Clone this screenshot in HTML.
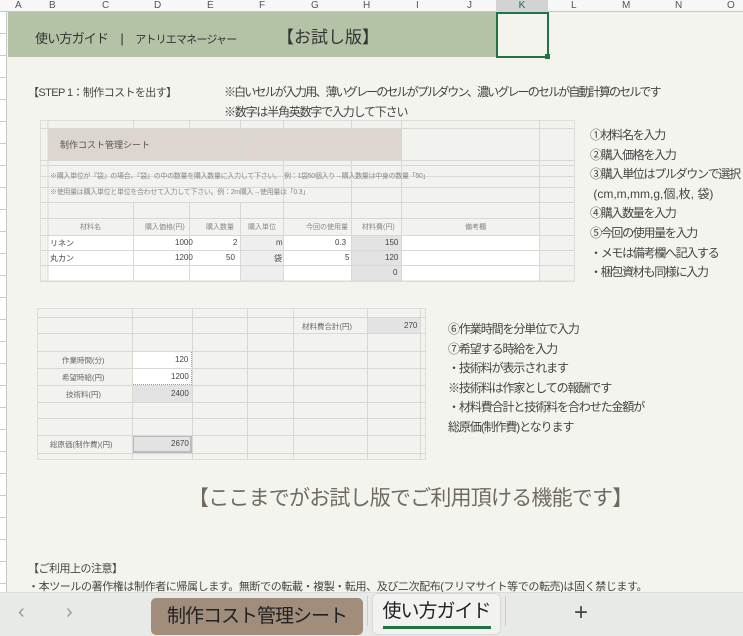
<!DOCTYPE html>
<html><head><meta charset="utf-8"><style>
*{margin:0;padding:0;box-sizing:border-box}
body{width:743px;height:636px;overflow:hidden;background:#f4f4ef;position:relative;font-family:"Liberation Sans","Noto Sans CJK JP",sans-serif;color:#444}
.a{position:absolute;white-space:nowrap}
</style></head><body>
<div class="a" style="left:0;top:0;width:743px;height:12px;background:#f7f7f7;border-bottom:1px solid #c8c8c8"></div>
<div class="a" style="left:0;top:0;width:743px;height:12px;font-size:10px;color:#555;line-height:12px">
<span class="a" style="left:15px">A</span><span class="a" style="left:49px">B</span><span class="a" style="left:102px">C</span><span class="a" style="left:154px">D</span><span class="a" style="left:207px">E</span><span class="a" style="left:259px">F</span><span class="a" style="left:311px">G</span><span class="a" style="left:363px">H</span><span class="a" style="left:416px">I</span><span class="a" style="left:467px">J</span><span class="a" style="left:496px;width:52px;text-align:center;background:#d3d3d3;color:#1d6b3a">K</span><span class="a" style="left:571px">L</span><span class="a" style="left:622px">M</span><span class="a" style="left:675px">N</span><span class="a" style="left:727px">O</span></div>
<div class="a" style="left:0;top:12px;width:7px;height:580px;background:#fff;border-right:1px solid #c8c8c8;background-image:repeating-linear-gradient(#fff 0 21px,#ccc 21px 22px)"></div>
<div class="a" style="left:8px;top:12px;width:488px;height:45px;background:#b4c2a6"></div>
<div class="a" style="left:35px;top:28px;font-size:13px;color:#333;letter-spacing:-0.8px">使い方ガイド　|　<span style="font-size:11px">アトリエマネージャー</span></div>
<div class="a" style="left:277px;top:23px;font-size:17px;color:#333">【お試し版】</div>
<div class="a" style="left:496px;top:12px;width:53px;height:46px;border:2px solid #217346"></div>
<div class="a" style="left:545px;top:54px;width:5px;height:5px;background:#217346"></div>
<div class="a" style="left:28px;top:84px;font-size:11px;color:#444;letter-spacing:-0.6px">【STEP 1：制作コストを出す】</div>
<div class="a" style="left:224px;top:83px;font-size:12px;color:#444;letter-spacing:-1.85px">※白いセルが入力用、薄いグレーのセルがプルダウン、濃いグレーのセルが自動計算のセルです</div>
<div class="a" style="left:224px;top:103px;font-size:12px;color:#444;letter-spacing:-1.2px">※数字は半角英数字で入力して下さい</div>
<div class="a" style="left:40px;top:120px;width:535px;height:162px;background:#f2f2ee;border:1px solid #ddd"></div>
<div class="a" style="left:48px;top:128px;width:353px;height:32px;background:#ddd6d0"></div>
<div class="a" style="left:48px;top:235px;width:491px;height:46px;background:#fff"></div>
<div class="a" style="left:240px;top:235px;width:43px;height:46px;background:#eee"></div>
<div class="a" style="left:351px;top:235px;width:50px;height:46px;background:#e3e3e3"></div>
<svg class="a" style="left:40px;top:120px" width="535" height="162">
<g stroke="#d8d8d4" stroke-width="1">
<line x1="8" y1="0" x2="8" y2="162"/><line x1="93.5" y1="0" x2="93.5" y2="40"/><line x1="93.5" y1="82" x2="93.5" y2="162"/>
<line x1="149.5" y1="0" x2="149.5" y2="40"/><line x1="149.5" y1="82" x2="149.5" y2="162"/>
<line x1="200.5" y1="0" x2="200.5" y2="40"/><line x1="200.5" y1="82" x2="200.5" y2="162"/>
<line x1="243.5" y1="0" x2="243.5" y2="162"/><line x1="311.5" y1="0" x2="311.5" y2="162"/><line x1="361.5" y1="0" x2="361.5" y2="162"/><line x1="499.5" y1="0" x2="499.5" y2="162"/>
<line x1="0" y1="8.5" x2="535" y2="8.5"/><line x1="0" y1="40.5" x2="535" y2="40.5"/><line x1="0" y1="45.5" x2="535" y2="45.5"/><line x1="0" y1="56.5" x2="535" y2="56.5"/><line x1="0" y1="67.5" x2="535" y2="67.5"/><line x1="0" y1="82.5" x2="535" y2="82.5"/><line x1="0" y1="98.5" x2="535" y2="98.5"/><line x1="0" y1="115.5" x2="535" y2="115.5"/><line x1="0" y1="130.5" x2="535" y2="130.5"/><line x1="0" y1="145.5" x2="535" y2="145.5"/><line x1="0" y1="161" x2="535" y2="161"/>
</g></svg>
<div class="a" style="left:60px;top:138px;font-size:9px;color:#555">制作コスト管理シート</div>
<div class="a" style="left:50px;top:171px;font-size:7px;color:#888;letter-spacing:-0.3px">※購入単位が『袋』の場合、『袋』の中の数量を購入数量に入力して下さい。　例：1袋50個入り→購入数量は中身の数量「50」</div>
<div class="a" style="left:50px;top:187px;font-size:7px;color:#888;letter-spacing:-0.3px">※使用量は購入単位と単位を合わせて入力して下さい。例：2m購入→使用量は「0.3」</div>
<div class="a" style="font-size:7px;color:#888;top:222px;left:0;width:743px">
<span class="a" style="left:80px">材料名</span><span class="a" style="left:145px">購入価格(円)</span><span class="a" style="left:206px">購入数量</span><span class="a" style="left:248px">購入単位</span><span class="a" style="left:306px">今回の使用量</span><span class="a" style="left:362px">材料費(円)</span><span class="a" style="left:465px">備考欄</span></div>
<div class="a" style="font-size:8px;color:#444;top:238px;left:0;width:743px">
<span class="a" style="left:50px">リネン</span><span class="a" style="left:175px">1000</span><span class="a" style="left:233px">2</span><span class="a" style="left:276px">m</span><span class="a" style="left:335px">0.3</span><span class="a" style="left:385px">150</span></div>
<div class="a" style="font-size:8px;color:#444;top:253px;left:0;width:743px">
<span class="a" style="left:50px">丸カン</span><span class="a" style="left:175px">1200</span><span class="a" style="left:226px">50</span><span class="a" style="left:274px">袋</span><span class="a" style="left:345px">5</span><span class="a" style="left:385px">120</span></div>
<div class="a" style="left:393px;top:268px;font-size:8px;color:#444">0</div>
<div class="a" style="left:590px;top:126px;font-size:12px;line-height:19.6px;color:#444;letter-spacing:-1.3px">①材料名を入力<br>②購入価格を入力<br>③購入単位はプルダウンで選択<br><span style="letter-spacing:0">&nbsp;(cm,m,mm,g,個,枚, 袋)</span><br>④購入数量を入力<br>⑤今回の使用量を入力<br>・メモは備考欄へ記入する<br>・梱包資材も同様に入力</div>
<div class="a" style="left:37px;top:308px;width:389px;height:152px;background:#f2f2ee;border:1px solid #ddd"></div>
<div class="a" style="left:132px;top:351px;width:60px;height:34px;background:#fff;border:1px dotted #999"></div>
<div class="a" style="left:132px;top:385px;width:60px;height:17px;background:#e3e3e3"></div>
<div class="a" style="left:367px;top:317px;width:53px;height:16px;background:#e3e3e3"></div>
<div class="a" style="left:132px;top:435px;width:60px;height:18px;background:#e3e3e3;border:2px solid #bbb"></div>
<svg class="a" style="left:37px;top:308px" width="389" height="152">
<g stroke="#d8d8d4" stroke-width="1">
<line x1="95.5" y1="0" x2="95.5" y2="152"/><line x1="155.5" y1="0" x2="155.5" y2="152"/><line x1="210.5" y1="0" x2="210.5" y2="152"/><line x1="256.5" y1="0" x2="256.5" y2="152"/><line x1="330.5" y1="0" x2="330.5" y2="152"/><line x1="383.5" y1="0" x2="383.5" y2="152"/>
<line x1="0" y1="9.5" x2="389" y2="9.5"/><line x1="0" y1="25.5" x2="389" y2="25.5"/><line x1="0" y1="43.5" x2="389" y2="43.5"/><line x1="0" y1="60.5" x2="389" y2="60.5"/><line x1="0" y1="77.5" x2="389" y2="77.5"/><line x1="0" y1="94.5" x2="389" y2="94.5"/><line x1="0" y1="110.5" x2="389" y2="110.5"/><line x1="0" y1="127.5" x2="389" y2="127.5"/><line x1="0" y1="145.5" x2="389" y2="145.5"/>
</g></svg>
<div class="a" style="left:302px;top:321px;font-size:7.5px;color:#666">材料費合計(円)</div><div class="a" style="left:404px;top:321px;font-size:8px;color:#444">270</div>
<div class="a" style="left:62px;top:355px;font-size:7.5px;color:#666">作業時間(分)</div><div class="a" style="left:175px;top:355px;font-size:8px;color:#444">120</div>
<div class="a" style="left:62px;top:372px;font-size:7.5px;color:#666">希望時給(円)</div><div class="a" style="left:171px;top:372px;font-size:8px;color:#444">1200</div>
<div class="a" style="left:66px;top:389px;font-size:7.5px;color:#666">技術料(円)</div><div class="a" style="left:171px;top:389px;font-size:8px;color:#444">2400</div>
<div class="a" style="left:50px;top:439px;font-size:7.5px;color:#666">総原価(制作費)(円)</div><div class="a" style="left:171px;top:439px;font-size:8px;color:#444">2670</div>
<div class="a" style="left:448px;top:320px;font-size:12px;line-height:19.6px;color:#444;letter-spacing:-1.1px">⑥作業時間を分単位で入力<br>⑦希望する時給を入力<br>・技術料が表示されます<br>※技術料は作家としての報酬です<br>・材料費合計と技術料を合わせた金額が<br>総原価(制作費)となります</div>
<div class="a" style="left:188px;top:482px;font-size:21px;color:#716a60;letter-spacing:-0.8px">【ここまでがお試し版でご利用頂ける機能です】</div>
<div class="a" style="left:28px;top:560px;font-size:11px;color:#444;letter-spacing:-0.5px">【ご利用上の注意】</div>
<div class="a" style="left:28px;top:578px;font-size:11px;color:#444;letter-spacing:-0.4px">・本ツールの著作権は制作者に帰属します。無断での転載・複製・転用、及び二次配布(フリマサイト等での転売)は固く禁じます。</div>
<div class="a" style="left:0;top:592px;width:743px;height:44px;background:#e8eae8;border-top:1px solid #ddd"></div>
<div class="a" style="left:18px;top:601px;font-size:20px;color:#999">&lsaquo;</div>
<div class="a" style="left:66px;top:601px;font-size:20px;color:#999">&rsaquo;</div>
<div class="a" style="left:151px;top:598px;width:212px;height:37px;background:#a08d7c;border-radius:5px;font-size:19px;color:#222;text-align:center;line-height:37px;letter-spacing:-1px">制作コスト管理シート</div>
<div class="a" style="left:367px;top:596px;width:1px;height:30px;background:#ccc"></div>
<div class="a" style="left:373px;top:594px;width:127px;height:40px;background:#f2f3f1;border-radius:5px;box-shadow:0 0 2px #bbb;font-size:19px;color:#222;text-align:center;line-height:36px;letter-spacing:-1px">使い方ガイド</div>
<div class="a" style="left:383px;top:626px;width:108px;height:3px;background:#217346"></div>
<div class="a" style="left:505px;top:596px;width:1px;height:30px;background:#ccc"></div>
<div class="a" style="left:574px;top:599px;font-size:24px;color:#444">+</div>
</body></html>
